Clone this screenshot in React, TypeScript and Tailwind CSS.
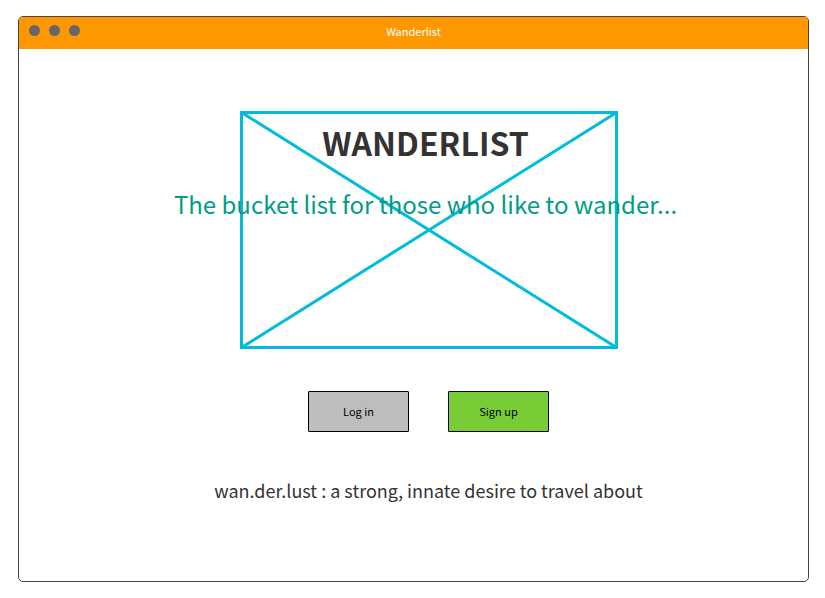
function Placeholder() {
  return (
    <svg
      viewBox="0 0 378 238"
      className="col-start-1 row-start-1 w-[378px] max-w-full"
      fill="none"
      stroke="#00bcd9"
      strokeWidth="3"
      aria-hidden="true"
    >
      <rect x="1.5" y="1.5" width="375" height="235" />
      <path d="M1.5 1.5 376.5 236.5M376.5 1.5 1.5 236.5" />
    </svg>
  );
}

export default function App() {
  return (
    <div className="flex min-h-screen bg-white py-4 pr-4 pl-[18px] font-['Noto_Sans_CJK_SC',sans-serif]">
      <div className="flex flex-1 flex-col overflow-hidden rounded-[5px] border border-[#444444] bg-white">
        <header className="grid h-8 grid-cols-[1fr_auto_1fr] items-center bg-[#ff9800] px-2.5 pb-1">
          <div className="flex gap-[9px] pb-px">
            <span className="size-[11px] rounded-full bg-[#666666]" />
            <span className="size-[11px] rounded-full bg-[#666666]" />
            <span className="size-[11px] rounded-full bg-[#666666]" />
          </div>
          <span className="text-[11px] leading-4 text-white">Wanderlist</span>
        </header>
        <main className="flex flex-1 flex-col items-center pt-[62px] pl-[30px]">
          <div className="grid justify-items-center">
            <Placeholder />
            <div className="col-start-1 row-start-1 pt-[11px] pr-1.5 text-center">
              <h1 className="text-[32px] leading-10 font-bold text-[#333333]">WANDERLIST</h1>
              <p className="mt-[22px] text-[24px] leading-10 text-[#009c87]">
                The bucket list for those who like to wander...
              </p>
            </div>
          </div>
          <div className="mt-[42px] flex gap-[39px]">
            <button className="h-[41px] w-[101px] rounded-[1px] border border-black bg-[#bdbdbd] pb-0.5 text-[11px] leading-4 text-black">
              Log in
            </button>
            <button className="h-[41px] w-[101px] rounded-[1px] border border-black bg-[#78cc35] pb-0.5 text-[11px] leading-4 text-black">
              Sign up
            </button>
          </div>
          <p className="mt-[42px] text-[18px] leading-8 text-[#333333]">
            wan.der.lust : a strong, innate desire to travel about
          </p>
        </main>
      </div>
    </div>
  );
}
